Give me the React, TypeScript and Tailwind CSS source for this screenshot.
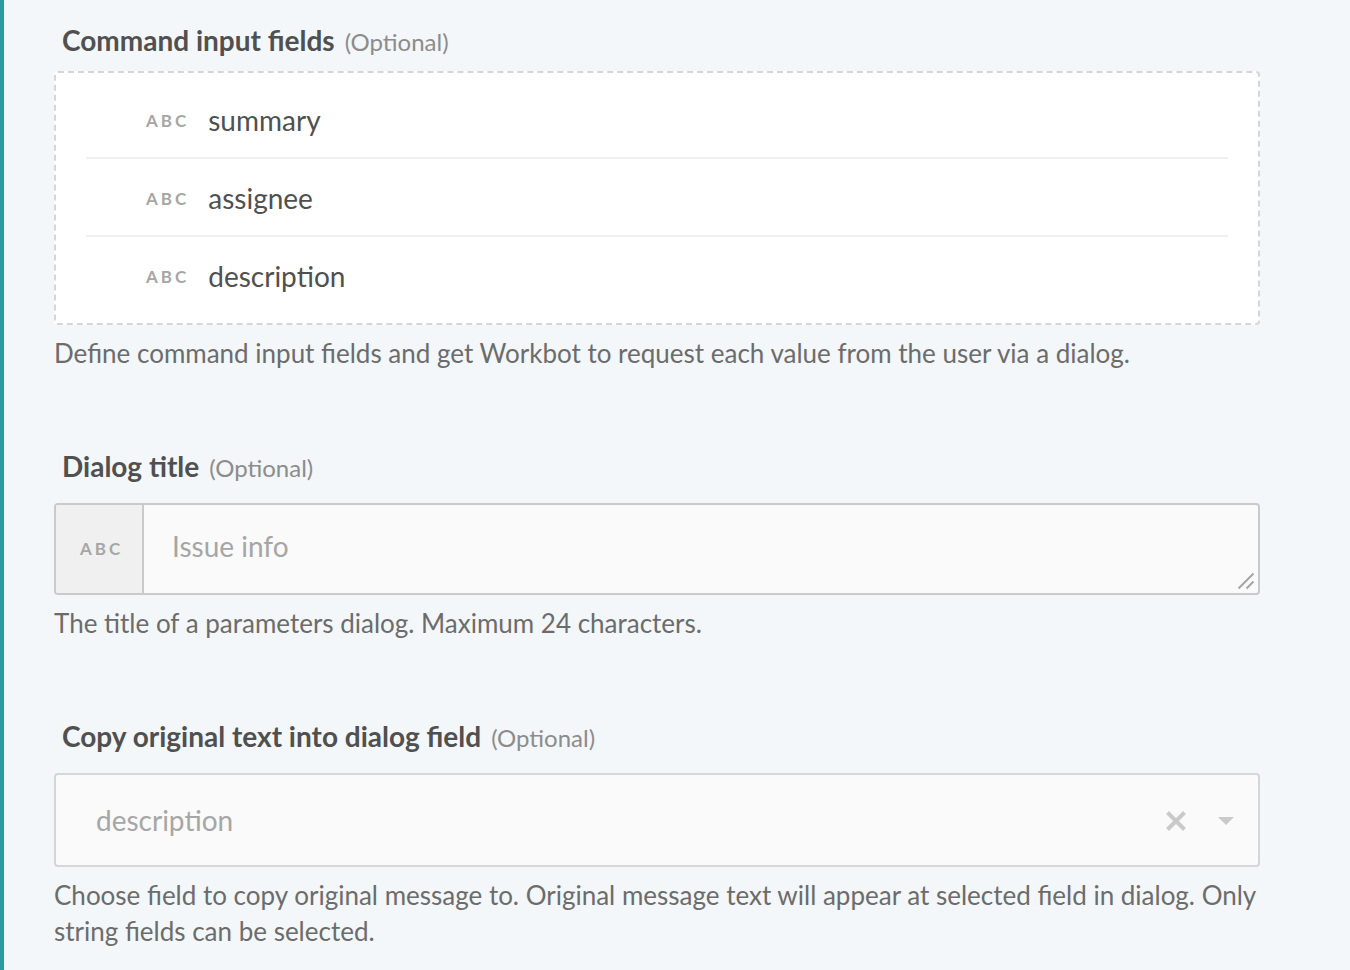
import { useId, useState } from 'react';
import type { ReactNode } from 'react';

function TypeTag() {
  return <span className="text-[17px] leading-6 font-bold tracking-[3px] text-[#a6a6a6]">ABC</span>;
}

function FieldLabel({ htmlFor, id, children }: { htmlFor?: string; id?: string; children: ReactNode }) {
  return (
    <div className="flex h-10 items-baseline gap-2.5 pl-2 leading-10">
      <label htmlFor={htmlFor} id={id} className="text-[28px] font-bold text-[#505050]">
        {children}
      </label>
      <span className="text-[24px] text-[#8c8c8c]">(Optional)</span>
    </div>
  );
}

function Hint({ children }: { children: ReactNode }) {
  return <p className="mt-2.5 text-[26px] leading-9 text-[#6c6c6c]">{children}</p>;
}

const inputFields = ['summary', 'assignee', 'description'];

export default function App() {
  const listId = useId();
  const titleId = useId();
  const copyId = useId();
  const [title, setTitle] = useState('Issue info');
  const [field, setField] = useState('description');

  return (
    <main className="flex min-h-screen flex-col gap-[75px] border-l-4 border-[#2a9aa0] bg-[#f3f7fa] pt-5 pr-[90px] pb-5 pl-[50px] font-['Lato',sans-serif]">
      <section>
        <FieldLabel id={listId}>Command input fields</FieldLabel>
        <ul
          aria-labelledby={listId}
          className="mt-[11px] divide-y-2 divide-[#f0f0f0] rounded-[4px] border-2 border-dashed border-[#d6d6d6] bg-white px-[30px] pt-2 pb-2.5"
        >
          {inputFields.map((name) => (
            <li key={name} className="box-content flex h-[72px] items-center gap-[19px] pt-1 pl-[60px]">
              <TypeTag />
              <span className="pb-0.5 text-[28px] leading-10 text-[#505050]">{name}</span>
            </li>
          ))}
        </ul>
        <Hint>Define command input fields and get Workbot to request each value from the user via a dialog.</Hint>
      </section>

      <section>
        <FieldLabel htmlFor={titleId}>Dialog title</FieldLabel>
        <div className="relative mt-[17px] flex h-[92px] overflow-hidden rounded-[4px] border-2 border-[#cacaca] bg-[#fafafa]">
          <div className="flex w-[88px] items-center border-r-2 border-[#cacaca] bg-[#f0f0f0] pl-6">
            <TypeTag />
          </div>
          <textarea
            id={titleId}
            rows={1}
            maxLength={24}
            value={title}
            onChange={(e) => setTitle(e.target.value)}
            className="min-w-0 flex-1 resize-none bg-transparent px-7 pt-[21px] text-[28px] leading-10 text-[#a6a6a6] outline-none"
          />
          <svg
            aria-hidden="true"
            viewBox="0 0 18 18"
            className="pointer-events-none absolute right-[3px] bottom-[3px] size-[18px] fill-none stroke-[#a5a5a5] stroke-2"
          >
            <path d="M1.5 16.5 16.5 1.5M9.5 16.5 16.5 9.5" />
          </svg>
        </div>
        <Hint>The title of a parameters dialog. Maximum 24 characters.</Hint>
      </section>

      <section>
        <FieldLabel htmlFor={copyId}>Copy original text into dialog field</FieldLabel>
        <div className="mt-[17px] flex h-[94px] items-center rounded-[4px] border-2 border-[#d6d6d6] bg-[#fafafa] pr-6">
          <select
            id={copyId}
            value={field}
            onChange={(e) => setField(e.target.value)}
            className="h-full min-w-0 flex-1 appearance-none bg-transparent pl-10 text-[28px] leading-10 text-[#a6a6a6] outline-none"
          >
            <option value="" />
            {inputFields.map((name) => (
              <option key={name} value={name}>
                {name}
              </option>
            ))}
          </select>
          <button type="button" aria-label="Clear selection" onClick={() => setField('')} className="mr-8 pt-0.5">
            <svg viewBox="0 0 20 20" className="size-5 fill-none stroke-[#cacaca] stroke-4">
              <path d="M1.5 1.5 18.5 18.5M18.5 1.5 1.5 18.5" />
            </svg>
          </button>
          <svg aria-hidden="true" viewBox="0 0 16 8" className="mt-0.5 h-2 w-4 fill-[#cacaca]">
            <path d="M0 0H16L8 8Z" />
          </svg>
        </div>
        <Hint>
          Choose field to copy original message to. Original message text will appear at selected field in dialog. Only
          string fields can be selected.
        </Hint>
      </section>
    </main>
  );
}
